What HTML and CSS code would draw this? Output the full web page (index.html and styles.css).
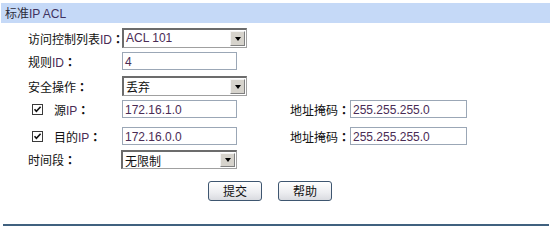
FILE: index.html
```html
<!DOCTYPE html>
<html>
<head>
<meta charset="utf-8">
<link rel="stylesheet" href="styles.css">
</head>
<body>
<div class="title">标准<span class="lt">IP ACL</span></div>
<div class="form">
  <div class="row r1">
    <span class="lbl">访问控制列表<span class="lt">ID</span><span class="co">：</span></span>
    <div class="sel wide"><span class="val lt">ACL 101</span><span class="btn"><i class="tri"></i></span></div>
  </div>
  <div class="row r2">
    <span class="lbl">规则<span class="lt">ID</span><span class="co">：</span></span>
    <div class="inp"><span class="lt">4</span></div>
  </div>
  <div class="row r3">
    <span class="lbl">安全操作<span class="co">：</span></span>
    <div class="sel wide"><span class="val">丢弃</span><span class="btn"><i class="tri"></i></span></div>
  </div>
  <div class="row r4">
    <span class="lbl ck">
      <svg class="cb" width="11" height="11" viewBox="0 0 11 11"><rect x="0.5" y="0.5" width="10" height="10" fill="#fff" stroke="#3a3a3a"/><path d="M2.5 5.2 L4.4 7.3 L8.6 2.8" fill="none" stroke="#111" stroke-width="1.6"/></svg>
      <span class="cl">源<span class="lt">IP</span><span class="co">：</span></span>
    </span>
    <div class="inp"><span class="lt">172.16.1.0</span></div>
    <span class="mlbl">地址掩码<span class="co">：</span></span>
    <div class="inp mask"><span class="lt">255.255.255.0</span></div>
  </div>
  <div class="row r5">
    <span class="lbl ck">
      <svg class="cb" width="11" height="11" viewBox="0 0 11 11"><rect x="0.5" y="0.5" width="10" height="10" fill="#fff" stroke="#3a3a3a"/><path d="M2.5 5.2 L4.4 7.3 L8.6 2.8" fill="none" stroke="#111" stroke-width="1.6"/></svg>
      <span class="cl">目的<span class="lt">IP</span><span class="co">：</span></span>
    </span>
    <div class="inp"><span class="lt">172.16.0.0</span></div>
    <span class="mlbl">地址掩码<span class="co">：</span></span>
    <div class="inp mask"><span class="lt">255.255.255.0</span></div>
  </div>
  <div class="row r6">
    <span class="lbl">时间段<span class="co">：</span></span>
    <div class="sel narrow"><span class="val">无限制</span><span class="btn"><i class="tri"></i></span></div>
  </div>
  <div class="btns">
    <button class="b">提交</button>
    <button class="b">帮助</button>
  </div>
</div>
<div class="rule"></div>
</body>
</html>
```
FILE: styles.css
```css
html, body {
  margin: 0;
  padding: 0;
  background: #fff;
}
body {
  width: 554px;
  height: 230px;
  overflow: hidden;
  font-family: "Noto Sans CJK SC", "Liberation Sans", sans-serif;
  font-size: 12px;
  color: #111;
}
.lt {
  font-family: "Liberation Sans", sans-serif;
  color: #4a2c55;
}
.co {
  font-family: "Noto Sans CJK TC", "Noto Sans CJK SC", sans-serif;
  font-weight: bold;
}
.title {
  margin: 3px 4px 0 1px;
  height: 20px;
  line-height: 19px;
  background: #c5d9f7;
  padding-left: 4px;
  color: #2c2c3a;
}
.title .lt { color: #3f3360; }
.form {
  padding-left: 28px;
}
.row {
  display: flex;
  align-items: center;
}
.r1 { margin-top: 5px; height: 20px; }
.r2 { margin-top: 4px; height: 18px; }
.r3 { margin-top: 6px; height: 20px; }
.r4 { margin-top: 4px; height: 18px; }
.r5 { margin-top: 9px; height: 18px; }
.r6 { margin-top: 5px; height: 19px; }
.lbl {
  width: 94px;
  flex: none;
  white-space: nowrap;
}
.ck {
  display: flex;
  align-items: center;
}
.cb {
  margin-left: 4px;
  flex: none;
}
.cl {
  margin-left: 11px;
}
.inp {
  box-sizing: border-box;
  width: 115px;
  height: 18px;
  border: 1px solid #9ba7b6;
  background: #fff;
  padding-left: 2px;
  line-height: 16px;
  flex: none;
}
.mlbl {
  margin-left: 53px;
  width: 60px;
  flex: none;
  white-space: nowrap;
}
.mask {
  width: 117px;
}
.sel {
  box-sizing: border-box;
  height: 20px;
  display: flex;
  align-items: stretch;
  border-top: 2px solid #6c6c6c;
  border-left: 2px solid #6c6c6c;
  border-right: 1px solid #a0a0a0;
  border-bottom: 1px solid #a0a0a0;
  background: #fff;
  flex: none;
}
.sel.wide { width: 125px; height: 20px; }
.sel.narrow { width: 116px; height: 19px; margin-left: -1px; }
.val {
  flex: 1;
  padding-left: 2px;
  line-height: 17px;
  color: #111;
}
.sel .val.lt { color: #4a2c55; }
.btn {
  width: 13px;
  margin: 1px 1px 1px 0;
  background: #d6d3cc;
  border-top: 1px solid #f4f4f4;
  border-left: 1px solid #f4f4f4;
  border-right: 1px solid #808080;
  border-bottom: 1px solid #808080;
  display: flex;
  align-items: center;
  justify-content: center;
}
.tri {
  width: 0;
  height: 0;
  border-left: 3.5px solid transparent;
  border-right: 3.5px solid transparent;
  border-top: 4px solid #000;
}
.btns {
  display: flex;
  gap: 16px;
  margin-top: 12px;
  margin-left: 180px;
}
.b {
  box-sizing: border-box;
  width: 54px;
  height: 20px;
  border: 1px solid #3e5670;
  border-radius: 3px;
  background: linear-gradient(#ffffff, #ecedf0 60%, #d9dbe0);
  font-family: "Noto Sans CJK SC", sans-serif;
  font-size: 12px;
  color: #111;
  padding: 0;
  line-height: 18px;
}
.rule {
  margin: 23px 5px 0 3px;
  height: 0;
  border-top: 2px solid #40617f;
}
```
